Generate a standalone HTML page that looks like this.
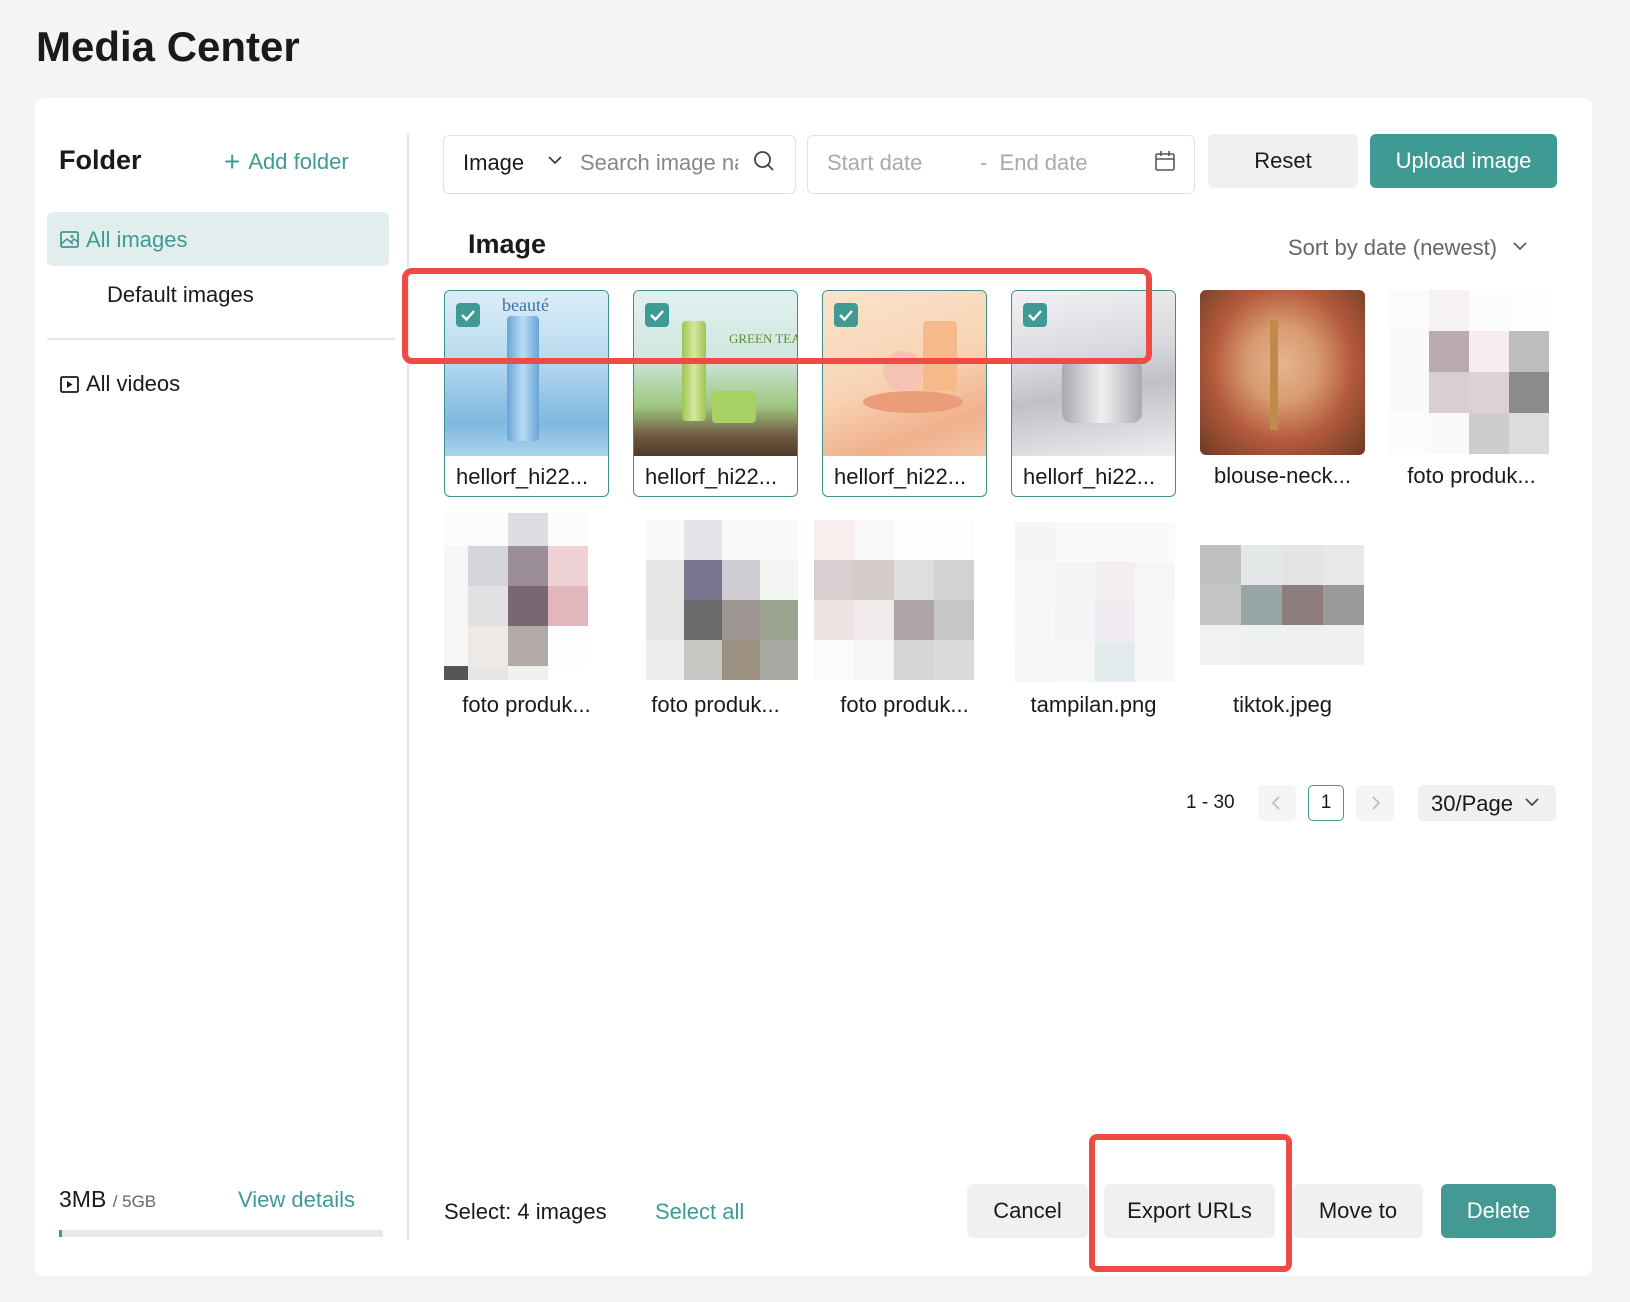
<!DOCTYPE html>
<html><head><meta charset="utf-8"><style>
*{box-sizing:border-box;margin:0;padding:0}
body{width:1630px;height:1302px;background:#f4f4f4;font-family:"Liberation Sans",sans-serif;color:#1a1a1a;position:relative;overflow:hidden}
.a{position:absolute}
.panel{left:35px;top:98px;width:1557px;height:1178px;background:#fff;border-radius:8px}
.teal{color:#3f9a94}
.btn{position:absolute;border-radius:6px;font-size:22px;display:flex;align-items:center;justify-content:center;background:#f0f0f0;color:#1a1a1a}
.tile{position:absolute;width:165px;height:207px;border:1.5px solid #3f8f8a;border-radius:6px;overflow:hidden;background:#fff}
.tile .img{position:absolute;left:0;top:0;width:100%;height:165px}
.lbl{position:absolute;left:0;right:0;top:173px;font-size:22px;padding-left:11px}
.plain{position:absolute;width:165px;height:207px}
.plain .lbl{text-align:center;padding:0}
.r2 .lbl{top:182px}
.chk{position:absolute;left:11px;top:12px;width:24px;height:24px;background:#3f9a94;border-radius:4px}
.grid{position:absolute;display:grid}
</style></head><body>
<div class="a" style="left:36px;top:23px;font-size:42px;font-weight:600;color:#1a1a1a">Media Center</div>
<div class="a panel"></div>

<div class="a" style="left:59px;top:145px;font-size:27px;font-weight:600">Folder</div>
<div class="a teal" style="left:224px;top:144px;font-size:22px"><span style="font-size:28px;position:relative;top:2px;margin-right:8px">+</span>Add folder</div>
<div class="a" style="left:47px;top:212px;width:342px;height:54px;background:#e1eeed;border-radius:6px"></div>
<svg class="a" style="left:60px;top:231px" width="19" height="17" viewBox="0 0 19 17"><rect x="1" y="1" width="17" height="15" rx="1.5" fill="none" stroke="#3f9a94" stroke-width="1.8"/><path d="M1 13 L7 8 L13 13 M11 11 L14 8 L18 11" fill="none" stroke="#3f9a94" stroke-width="1.6"/><circle cx="12" cy="5.5" r="1.5" fill="#3f9a94"/></svg>
<div class="a teal" style="left:86px;top:227px;font-size:22px">All images</div>
<div class="a" style="left:107px;top:282px;font-size:22px">Default images</div>
<div class="a" style="left:47px;top:338px;width:348px;height:2px;background:#e6e6e6"></div>
<svg class="a" style="left:60px;top:376px" width="19" height="17" viewBox="0 0 19 17"><rect x="1" y="1" width="17" height="15" rx="1.5" fill="none" stroke="#1a1a1a" stroke-width="1.8"/><path d="M7 5 L12.5 8.5 L7 12Z" fill="#1a1a1a"/></svg>
<div class="a" style="left:86px;top:371px;font-size:22px">All videos</div>
<div class="a" style="left:407px;top:134px;width:1.5px;height:1106px;background:#e6e6e6"></div>
<div class="a" style="left:59px;top:1186px;font-size:23px">3MB <span style="font-size:17px;color:#666">/ 5GB</span></div>
<div class="a teal" style="left:238px;top:1187px;font-size:22px">View details</div>
<div class="a" style="left:59px;top:1230px;width:324px;height:7px;background:#e8e8e8"><div style="width:3px;height:7px;background:#3f9a94"></div></div>

<!-- toolbar -->
<div class="a" style="left:443px;top:135px;width:353px;height:59px;border:1.5px solid #e1e1e1;border-radius:6px"></div>
<div class="a" style="left:463px;top:150px;font-size:22px">Image</div>
<svg class="a" style="left:548px;top:156px" width="14" height="9"><path d="M1 1 L7 7 L13 1" fill="none" stroke="#333" stroke-width="1.6"/></svg>
<div class="a" style="left:580px;top:150px;font-size:22px;color:#888;width:158px;overflow:hidden;white-space:nowrap">Search image name</div>
<svg class="a" style="left:753px;top:150px" width="22" height="22"><circle cx="9.5" cy="9.5" r="7.5" fill="none" stroke="#444" stroke-width="1.8"/><path d="M15 15 L20 20" stroke="#444" stroke-width="1.8"/></svg>
<div class="a" style="left:807px;top:135px;width:388px;height:59px;border:1.5px solid #e1e1e1;border-radius:6px"></div>
<div class="a" style="left:827px;top:150px;font-size:22px;color:#aaa">Start date</div>
<div class="a" style="left:980px;top:150px;font-size:22px;color:#aaa">-&nbsp;&nbsp;End date</div>
<svg class="a" style="left:1155px;top:151px" width="20" height="20"><rect x="1" y="3" width="18" height="16" rx="1.5" fill="none" stroke="#555" stroke-width="1.6"/><path d="M1 8 H19 M6 0 V5 M14 0 V5" stroke="#555" stroke-width="1.6"/></svg>
<div class="btn" style="left:1208px;top:134px;width:150px;height:54px">Reset</div>
<div class="btn" style="left:1370px;top:134px;width:187px;height:54px;background:#3f9a94;color:#fff">Upload image</div>

<div class="a" style="left:468px;top:229px;font-size:27px;font-weight:600">Image</div>
<div class="a" style="left:1288px;top:235px;font-size:22px;color:#666">Sort by date (newest)</div>
<svg class="a" style="left:1513px;top:242px" width="14" height="9"><path d="M1 1 L7 7 L13 1" fill="none" stroke="#555" stroke-width="1.6"/></svg>

<!-- row 1 -->
<div class="tile" style="left:444px;top:290px"><div class="img" style="background:linear-gradient(180deg,#dceef8 0%,#b9dbef 40%,#7fb8e0 80%,#a9d3ea 100%)"><div class="a" style="left:62px;top:25px;width:32px;height:125px;background:linear-gradient(90deg,#6aa4d8,#b9dcf5,#6aa4d8);border-radius:4px"></div><div class="a" style="left:57px;top:4px;font-family:'Liberation Serif',serif;font-size:18px;color:#3d6fa8">beauté</div></div><div class="chk"><svg width="24" height="24"><path d="M6 12 L10.5 16.5 L18 8" fill="none" stroke="#fff" stroke-width="2.4"/></svg></div><div class="lbl">hellorf_hi22...</div></div>
<div class="tile" style="left:633px;top:290px"><div class="img" style="background:linear-gradient(180deg,#e2f1f0 0%,#cfe7df 40%,#9fc680 70%,#6e5840 88%,#4f3b2a 100%)"><div class="a" style="left:48px;top:30px;width:24px;height:100px;background:linear-gradient(90deg,#9dc456,#d6ea9c,#9dc456);border-radius:4px"></div><div class="a" style="left:78px;top:100px;width:44px;height:32px;background:#a7d162;border-radius:4px"></div><div class="a" style="left:95px;top:40px;font-family:'Liberation Serif',serif;font-size:13px;color:#5a8f2a;white-space:nowrap">GREEN TEA</div></div><div class="chk"><svg width="24" height="24"><path d="M6 12 L10.5 16.5 L18 8" fill="none" stroke="#fff" stroke-width="2.4"/></svg></div><div class="lbl">hellorf_hi22...</div></div>
<div class="tile" style="left:822px;top:290px"><div class="img" style="background:linear-gradient(160deg,#fbe3cc 0%,#f8d4b4 50%,#f0b08c 80%,#f4c7a6 100%)"><div class="a" style="left:60px;top:60px;width:40px;height:40px;border-radius:50%;background:#f6c2b3"></div><div class="a" style="left:100px;top:30px;width:34px;height:70px;background:#f5b98a;border-radius:4px"></div><div class="a" style="left:40px;top:100px;width:100px;height:22px;background:#eb9c78;border-radius:50%"></div></div><div class="chk"><svg width="24" height="24"><path d="M6 12 L10.5 16.5 L18 8" fill="none" stroke="#fff" stroke-width="2.4"/></svg></div><div class="lbl">hellorf_hi22...</div></div>
<div class="tile" style="left:1011px;top:290px"><div class="img" style="background:linear-gradient(170deg,#f2f2f4 0%,#d8d9de 40%,#bfc1c7 60%,#eeeff2 100%)"><div class="a" style="left:50px;top:72px;width:80px;height:60px;background:linear-gradient(90deg,#a8aab0,#f0f0f2,#a8aab0);border-radius:4px 4px 10px 10px"></div></div><div class="chk"><svg width="24" height="24"><path d="M6 12 L10.5 16.5 L18 8" fill="none" stroke="#fff" stroke-width="2.4"/></svg></div><div class="lbl">hellorf_hi22...</div></div>
<div class="plain" style="left:1200px;top:290px"><div class="a" style="left:0;top:0;width:165px;height:165px;border-radius:6px;background:radial-gradient(ellipse at 50% 45%,#e5b58f 0%,#d79a70 30%,#b45a3c 60%,#6b3a22 100%)"><div class="a" style="left:70px;top:30px;width:8px;height:110px;background:#c08a4a"></div></div><div class="lbl">blouse-neck...</div></div>
<div class="plain" style="left:1389px;top:290px"><div class="grid" style="left:0;top:0;grid-template-columns:repeat(4,40px);grid-template-rows:repeat(4,41px)">
<div style="background:#fbfbfb"></div><div style="background:#f7f2f2"></div><div style="background:#fcfcfc"></div><div style="background:#fdfdfd"></div>
<div style="background:#f9f9f9"></div><div style="background:#b9aaad"></div><div style="background:#f6eeee"></div><div style="background:#bdbdbd"></div>
<div style="background:#f9f9f9"></div><div style="background:#d9cfd0"></div><div style="background:#ddd2d3"></div><div style="background:#8b8b8b"></div>
<div style="background:#fcfcfc"></div><div style="background:#fbf9fa"></div><div style="background:#cdcdcd"></div><div style="background:#dcdcdc"></div></div><div class="lbl">foto produk...</div></div>

<!-- row 2 -->
<div class="plain r2" style="left:444px;top:510px"><div class="grid" style="left:0;top:3px;grid-template-columns:24px 40px 40px 40px;grid-template-rows:33px 40px 40px 40px 14px">
<div style="background:#fcfcfc"></div><div style="background:#fcfcfc"></div><div style="background:#dcdde2"></div><div style="background:#fcfcfc"></div>
<div style="background:#f6f6f8"></div><div style="background:#d4d6dc"></div><div style="background:#9b8e98"></div><div style="background:#efd2d6"></div>
<div style="background:#f6f6f8"></div><div style="background:#e1e1e4"></div><div style="background:#786773"></div><div style="background:#e2b7bb"></div>
<div style="background:#f7f6f5"></div><div style="background:#ece9e6"></div><div style="background:#b1aaa6"></div><div style="background:#fdfdfd"></div>
<div style="background:#555"></div><div style="background:#e6e6e6"></div><div style="background:#f0f0f0"></div><div></div></div><div class="lbl">foto produk...</div></div>
<div class="plain r2" style="left:633px;top:510px"><div class="grid" style="left:13px;top:10px;grid-template-columns:repeat(4,38px);grid-template-rows:repeat(4,40px)">
<div style="background:#fafafa"></div><div style="background:#e5e3ea"></div><div style="background:#fafafa"></div><div style="background:#fafafa"></div>
<div style="background:#e6e6e6"></div><div style="background:#7b7592"></div><div style="background:#d0ccd3"></div><div style="background:#f3f3f1"></div>
<div style="background:#e6e6e6"></div><div style="background:#6b6b6c"></div><div style="background:#9e9692"></div><div style="background:#9aa38e"></div>
<div style="background:#eeeeee"></div><div style="background:#c6c6c2"></div><div style="background:#9d9181"></div><div style="background:#a6aaa2"></div></div><div class="lbl">foto produk...</div></div>
<div class="plain r2" style="left:822px;top:510px"><div class="grid" style="left:-8px;top:10px;grid-template-columns:repeat(4,40px);grid-template-rows:repeat(4,40px)">
<div style="background:#f9eeee"></div><div style="background:#fbf8f8"></div><div style="background:#fdfdfd"></div><div style="background:#fdfdfd"></div>
<div style="background:#dacfd0"></div><div style="background:#d5cccc"></div><div style="background:#dedede"></div><div style="background:#d3d3d3"></div>
<div style="background:#efe3e4"></div><div style="background:#f1eaea"></div><div style="background:#aea5a6"></div><div style="background:#c6c6c6"></div>
<div style="background:#fbfbfb"></div><div style="background:#f6f6f6"></div><div style="background:#d5d5d5"></div><div style="background:#dadada"></div></div><div class="lbl">foto produk...</div></div>
<div class="plain r2" style="left:1011px;top:510px"><div class="grid" style="left:4px;top:12px;grid-template-columns:repeat(4,40px);grid-template-rows:repeat(4,40px)">
<div style="background:#f5f5f5"></div><div style="background:#fafafa"></div><div style="background:#fafafa"></div><div style="background:#fafafa"></div>
<div style="background:#f6f6f7"></div><div style="background:#f5f5f7"></div><div style="background:#f3eff1"></div><div style="background:#f6f6f8"></div>
<div style="background:#f6f7f7"></div><div style="background:#f4f5f7"></div><div style="background:#efebf0"></div><div style="background:#f7f7f7"></div>
<div style="background:#f6f6f6"></div><div style="background:#f7f7f7"></div><div style="background:#e3ebec"></div><div style="background:#f7f7f7"></div></div><div class="lbl">tampilan.png</div></div>
<div class="plain r2" style="left:1200px;top:510px"><div class="grid" style="left:0;top:35px;grid-template-columns:repeat(4,41px);grid-template-rows:repeat(3,40px)">
<div style="background:#c0c0c0"></div><div style="background:#e5e8e8"></div><div style="background:#e4e4e4"></div><div style="background:#e8e8e8"></div>
<div style="background:#c4c6c5"></div><div style="background:#98a6a5"></div><div style="background:#8e7c7f"></div><div style="background:#999b9a"></div>
<div style="background:#f0f1f1"></div><div style="background:#eff0f0"></div><div style="background:#f0f0f0"></div><div style="background:#eff0f0"></div></div><div class="lbl">tiktok.jpeg</div></div>

<!-- red highlight -->
<div class="a" style="left:402px;top:268px;width:750px;height:96px;border:6px solid #f04a45;border-radius:10px"></div>

<!-- pagination -->
<div class="a" style="left:1186px;top:792px;font-size:19px">1 - 30</div>
<div class="a" style="left:1258px;top:785px;width:38px;height:36px;background:#f5f5f5;border-radius:5px"><svg width="38" height="36"><path d="M21 12 L15 18 L21 24" fill="none" stroke="#bbb" stroke-width="1.6"/></svg></div>
<div class="a" style="left:1308px;top:785px;width:36px;height:36px;border:1.5px solid #3f9a94;border-radius:5px;font-size:19px;text-align:center;line-height:33px">1</div>
<div class="a" style="left:1356px;top:785px;width:38px;height:36px;background:#f5f5f5;border-radius:5px"><svg width="38" height="36"><path d="M17 12 L23 18 L17 24" fill="none" stroke="#bbb" stroke-width="1.6"/></svg></div>
<div class="a" style="left:1418px;top:785px;width:138px;height:36px;background:#f0f0f0;border-radius:5px;font-size:22px;padding:6px 0 0 13px">30/Page</div>
<svg class="a" style="left:1525px;top:798px" width="14" height="9"><path d="M1 1 L7 7 L13 1" fill="none" stroke="#444" stroke-width="1.6"/></svg>

<!-- bottom -->
<div class="a" style="left:444px;top:1199px;font-size:22px">Select: 4 images</div>
<div class="a teal" style="left:655px;top:1199px;font-size:22px">Select all</div>
<div class="btn" style="left:967px;top:1184px;width:121px;height:54px">Cancel</div>
<div class="btn" style="left:1104px;top:1184px;width:171px;height:54px">Export URLs</div>
<div class="btn" style="left:1293px;top:1184px;width:130px;height:54px">Move to</div>
<div class="btn" style="left:1441px;top:1184px;width:115px;height:54px;background:#449994;color:#fff">Delete</div>
<div class="a" style="left:1089px;top:1134px;width:203px;height:138px;border:6px solid #f04a45;border-radius:8px"></div>
</body></html>
